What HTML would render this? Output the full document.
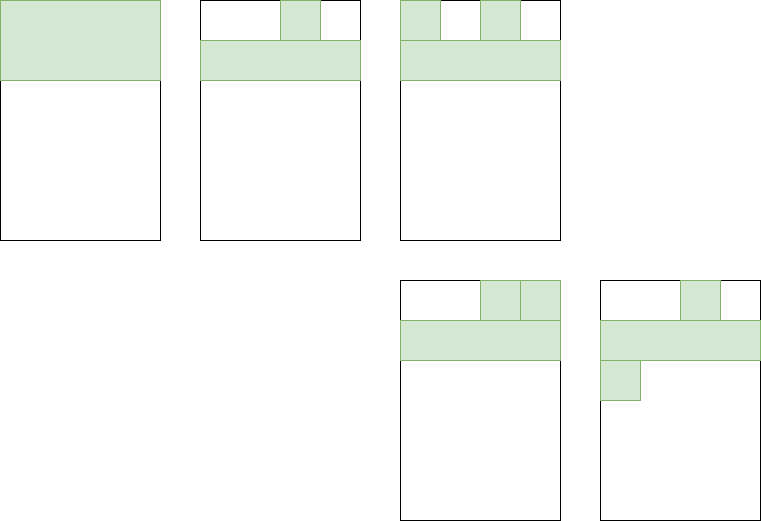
<!DOCTYPE html>
<html><head><style>html,body{margin:0;padding:0;background:#fff}svg{display:block}</style></head>
<body>
<svg width="761" height="521" viewBox="0 0 761 521" xmlns="http://www.w3.org/2000/svg">
<g fill="#fff" stroke="#000" stroke-width="1">
<rect x="0.5" y="0.5" width="160" height="240"/>
<rect x="200.5" y="0.5" width="160" height="240"/>
<rect x="400.5" y="0.5" width="160" height="240"/>
<rect x="400.5" y="280.5" width="160" height="240"/>
<rect x="600.5" y="280.5" width="160" height="240"/>
</g>
<g fill="#d5e8d4" stroke="#82b366" stroke-width="1">
<rect x="0.5" y="0.5" width="160" height="80"/>
<rect x="280.5" y="0.5" width="40" height="40"/>
<rect x="200.5" y="40.5" width="160" height="40"/>
<rect x="400.5" y="0.5" width="40" height="40"/>
<rect x="480.5" y="0.5" width="40" height="40"/>
<rect x="400.5" y="40.5" width="160" height="40"/>
<rect x="480.5" y="280.5" width="40" height="40"/>
<rect x="520.5" y="280.5" width="40" height="40"/>
<rect x="400.5" y="320.5" width="160" height="40"/>
<rect x="680.5" y="280.5" width="40" height="40"/>
<rect x="600.5" y="320.5" width="160" height="40"/>
<rect x="600.5" y="360.5" width="40" height="40"/>
</g>
</svg>
</body></html>
